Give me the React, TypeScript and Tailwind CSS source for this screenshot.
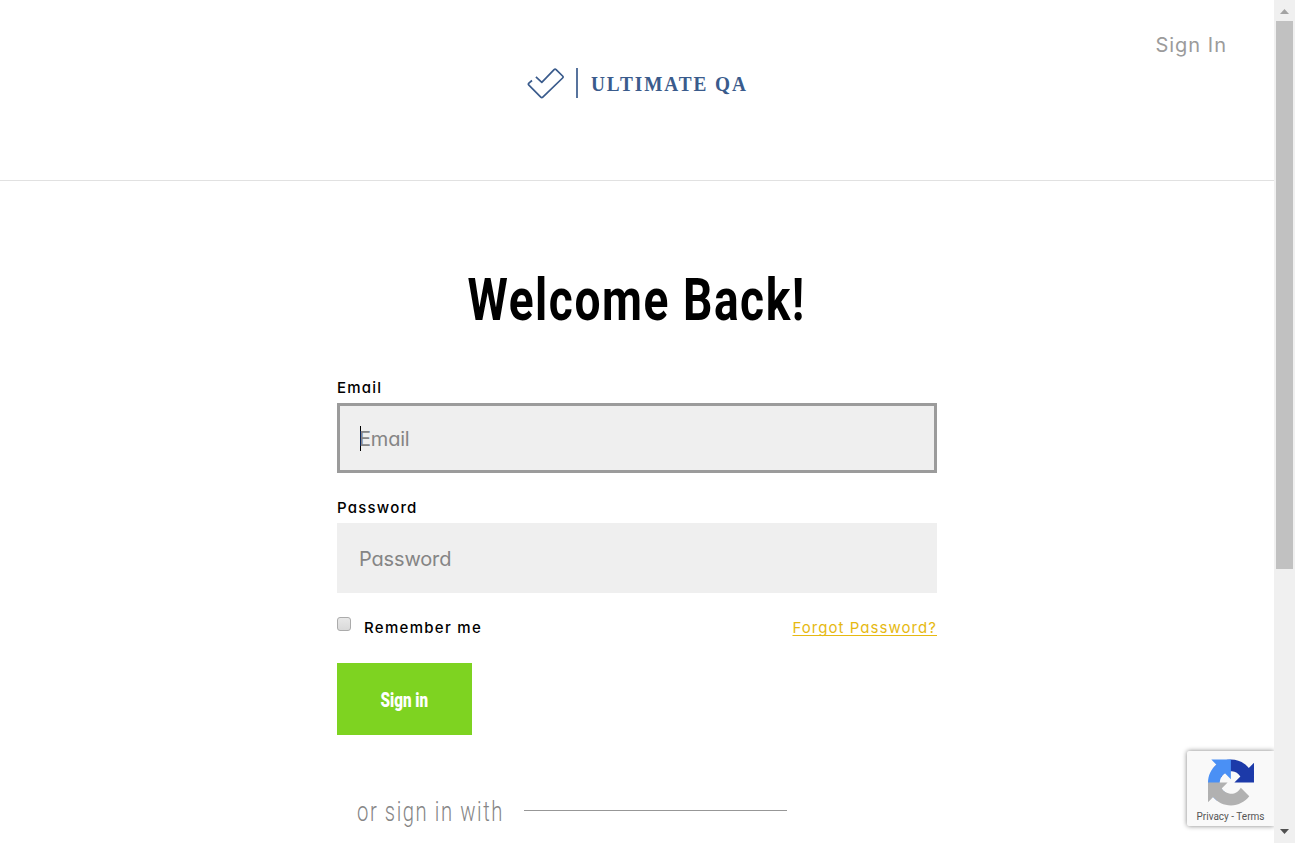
import React from "react";

const body = "font-['Inter','Noto_Sans',sans-serif] [font-feature-settings:'cv11']";
const heading = "font-['Roboto','Liberation_Sans',sans-serif]";

function Logo() {
  return (
    <div className="mt-[67px] flex h-8 w-[221px] items-center">
      <svg width="52" height="32" viewBox="0 0 52 32" fill="none" stroke="#3a5b8c" strokeWidth="1.7" strokeLinejoin="round" className="shrink-0">
        <path d="M5 13.500 1.900 16.200Q.9 17.200 1.900 18.200L13.800 30.200Q14.800 31.200 15.800 30.200L35.600 11Q36.600 10 35.600 9L29.100 2.600Q28.100 1.700 27.100 2.600L14.800 15.300 8.900 9.800" />
        <path d="M50 1v30" />
      </svg>
      <span className="ml-[12px] mt-[2px] inline-block origin-left scale-x-[0.965] whitespace-nowrap font-['Liberation_Serif',serif] text-[20px] font-bold leading-8 tracking-[2px] text-[#3a5b8c]">
        ULTIMATE QA
      </span>
    </div>
  );
}

function Recaptcha() {
  return (
    <div className="absolute right-0 top-[751px] flex h-[75px] w-[87px] flex-col items-center rounded-l-[2px] bg-[#f9f9f9] shadow-[0_0_5px_gray]">
      <svg width="46" height="47" viewBox="0 0 64 64" className="mt-[8px] shrink-0">
        <path fill="#1c3aa9" d="M64 31.955l-.033-1.370V4.687l-7.160 7.160C50.948 4.674 42.033.093 32.050.093c-10.400 0-19.622 4.960-25.458 12.640l11.736 11.860a15.550 15.550 0 0 1 4.754-5.334c2.050-1.600 4.952-2.906 8.968-2.906.485 0 .860.057 1.135.163 4.976.393 9.288 3.140 11.828 7.124l-8.307 8.307L64 31.953" />
        <path fill="#4a90f5" d="M31.862.094l-1.370.033H4.594l7.160 7.160C4.580 13.147 0 22.060 0 32.046c0 10.400 4.960 19.622 12.640 25.458L24.500 45.768a15.550 15.550 0 0 1-5.334-4.754c-1.600-2.050-2.906-4.952-2.906-8.968 0-.485.057-.860.163-1.135.393-4.976 3.140-9.288 7.124-11.828l8.307 8.307L31.860.095" />
        <path fill="#b1b1b1" d="M.001 32.045l.033 1.370v25.898l7.160-7.160c5.860 7.173 14.774 11.754 24.760 11.754 10.400 0 19.622-4.960 25.458-12.640l-11.736-11.860a15.550 15.550 0 0 1-4.754 5.334c-2.050 1.600-4.952 2.906-8.968 2.906-.485 0-.860-.057-1.135-.163-4.976-.393-9.288-3.140-11.828-7.124l8.307-8.307L.001 32.046" />
      </svg>
      <div className="mt-[4px] whitespace-nowrap font-['Roboto',sans-serif] text-[10px] leading-[14px] text-[#555]">Privacy - Terms</div>
    </div>
  );
}

function Scrollbar() {
  return (
    <div className="flex w-[21px] shrink-0 flex-col items-center bg-[#f0f0f0]">
      <svg width="21" height="21" className="shrink-0">
        <path d="M6 14h9l-4.500-5z" fill="#a3a3a3" />
      </svg>
      <div className="h-[548px] w-[17px] bg-[#c1c1c1]" />
      <svg width="21" height="21" className="mt-auto shrink-0">
        <path d="M6 7h9l-4.500 5z" fill="#505050" />
      </svg>
    </div>
  );
}

export default function App() {
  return (
    <div className={`flex h-[843px] w-[1295px] overflow-hidden bg-white ${body}`}>
      <div className="relative min-w-0 flex-1 overflow-hidden">
        <header className="grid h-[181px] grid-cols-[1fr_221px_1fr] border-b border-[#e1e1e1]">
          <div />
          <Logo />
          <a className="mr-[47px] mt-[30px] h-[30px] justify-self-end whitespace-nowrap text-[20px] leading-[30px] tracking-[1px] text-[#9b9b9b]">Sign In</a>
        </header>
        <main className="mx-auto w-[600px]">
          <h1 className={`mt-[84px] flex h-[70px] justify-center whitespace-nowrap text-[59px] font-bold leading-[70px] tracking-[2px] text-black ${heading}`}>
            <span className="inline-block scale-x-[0.781]">Welcome Back!</span>
          </h1>
          <form>
            <label className="mt-[42px] block h-[26px] pt-px text-[15px] font-medium leading-[20px] tracking-[1.2px] text-black">Email</label>
            <div className="flex h-[70px] items-center border-[3px] border-[#9b9b9b] bg-[#efefef] pl-5">
              <div className="h-[25px] w-px bg-black" />
              <span className="-ml-[2px] pt-[2px] text-[20px] leading-[30px] tracking-[-0.2px] text-[#858585]">Email</span>
            </div>
            <label className="mt-6 block h-[26px] pt-px text-[15px] font-medium leading-[20px] tracking-[1.2px] text-black">Password</label>
            <div className="flex h-[70px] items-center bg-[#efefef] pl-[22px] pt-[2px]">
              <span className="text-[20px] leading-[30px] tracking-[-0.15px] text-[#858585]">Password</span>
            </div>
            <div className="mt-[24px] flex h-[22px] items-start justify-between text-[15px] leading-[22px]">
              <div className="flex">
                <div className="h-[14px] w-[14px] rounded-[3px] border border-[#ababab] bg-linear-to-b from-[#e8e8e8] to-[#d9d9d9]" />
                <span className="ml-[13px] font-medium tracking-[1.3px] text-black">Remember me</span>
              </div>
              <a className="tracking-[1.05px] text-[#e6b912] underline decoration-1 underline-offset-[2px] [text-decoration-skip-ink:none]">Forgot Password?</a>
            </div>
            <button type="button" className={`mt-6 flex h-[72px] w-[135px] items-center justify-center bg-[#7ed321] pt-px text-[20px] font-black text-white ${heading}`}>
              <span className="inline-block scale-x-[0.76]">Sign in</span>
            </button>
          </form>
          <div className="mt-[55px] flex h-[40px] items-center pl-5">
            <div className={`w-[167px] whitespace-nowrap pt-[3px] text-[27px] font-light leading-[40px] tracking-[2.1px] text-[#858585] ${heading}`}>
              <span className="inline-block origin-left scale-x-[0.75]">or sign in with</span>
            </div>
            <div className="h-px w-[263px] bg-[#979797]" />
          </div>
        </main>
        <Recaptcha />
      </div>
      <Scrollbar />
    </div>
  );
}
